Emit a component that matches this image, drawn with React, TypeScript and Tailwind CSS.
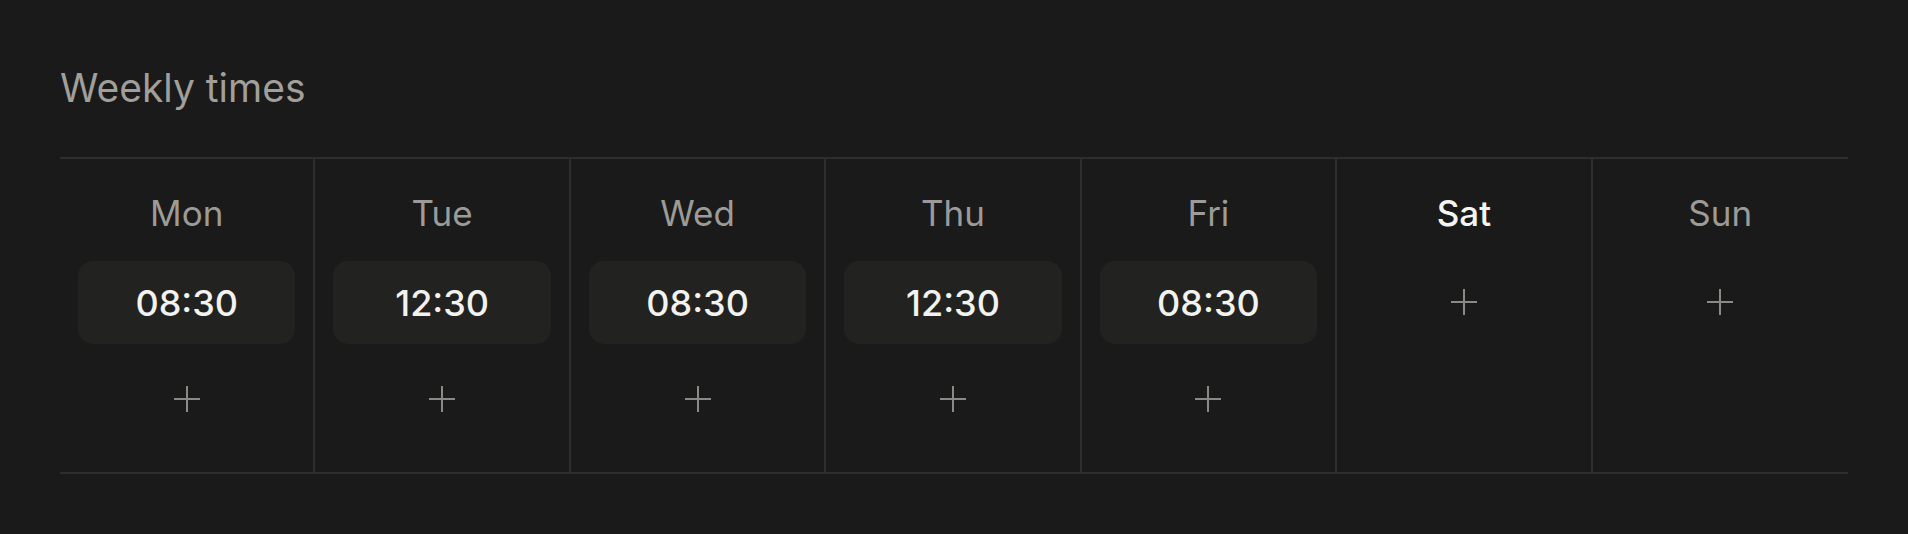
import { memo } from 'react';

interface DaySlot {
  day: string;
  times: string[];
  active?: boolean;
}

const WEEK: DaySlot[] = [
  { day: 'Mon', times: ['08:30'] },
  { day: 'Tue', times: ['12:30'] },
  { day: 'Wed', times: ['08:30'] },
  { day: 'Thu', times: ['12:30'] },
  { day: 'Fri', times: ['08:30'] },
  { day: 'Sat', times: [], active: true },
  { day: 'Sun', times: [] },
];

function PlusIcon() {
  return (
    <svg width="28" height="28" viewBox="0 0 28 28" fill="none" stroke="currentColor" strokeWidth="2">
      <line x1="14" y1="1" x2="14" y2="27" />
      <line x1="1" y1="14" x2="27" y2="14" />
    </svg>
  );
}

function AddButton() {
  return (
    <button className="flex h-[56px] w-full items-center justify-center text-[#8a8a87]">
      <PlusIcon />
    </button>
  );
}

const DayColumn = memo(function DayColumn({ slot, last }: { slot: DaySlot; last: boolean }) {
  return (
    <div
      className={`flex flex-col items-center px-[18px] pt-[33px] pb-[45px] ${
        last ? '' : 'border-r-2 border-[#2e2e2d]'
      }`}>
      <div
        className={`text-[35px] leading-[42px] ${
          slot.active ? 'text-[#f4f4f2] font-medium' : 'text-[#9c9b97]'
        }`}>
        {slot.day}
      </div>
      {slot.times.map(time => (
        <div
          key={time}
          className="mt-[27px] flex h-[83px] w-full items-center justify-center rounded-[15px] bg-[#222221] text-[36px] font-medium text-[#f2f2ef]">
          {time}
        </div>
      ))}
      <div className={slot.times.length ? 'mt-[27px] w-full' : 'mt-[40px] w-full'}>
        <AddButton />
      </div>
    </div>
  );
});

export default function App() {
  return (
    <div
      className="min-h-[534px] w-full bg-[#1a1a1a] px-[60px] pt-[65px]"
      style={{ fontFamily: 'Inter, "Noto Sans", sans-serif' }}>
      <h2 className="mb-[46px] text-[39px] leading-[46px] text-[#a09f9a]">Weekly times</h2>
      <div className="grid grid-cols-7 border-y-2 border-[#2e2e2d]">
        {WEEK.map((slot, i) => (
          <DayColumn key={slot.day} slot={slot} last={i === WEEK.length - 1} />
        ))}
      </div>
    </div>
  );
}
